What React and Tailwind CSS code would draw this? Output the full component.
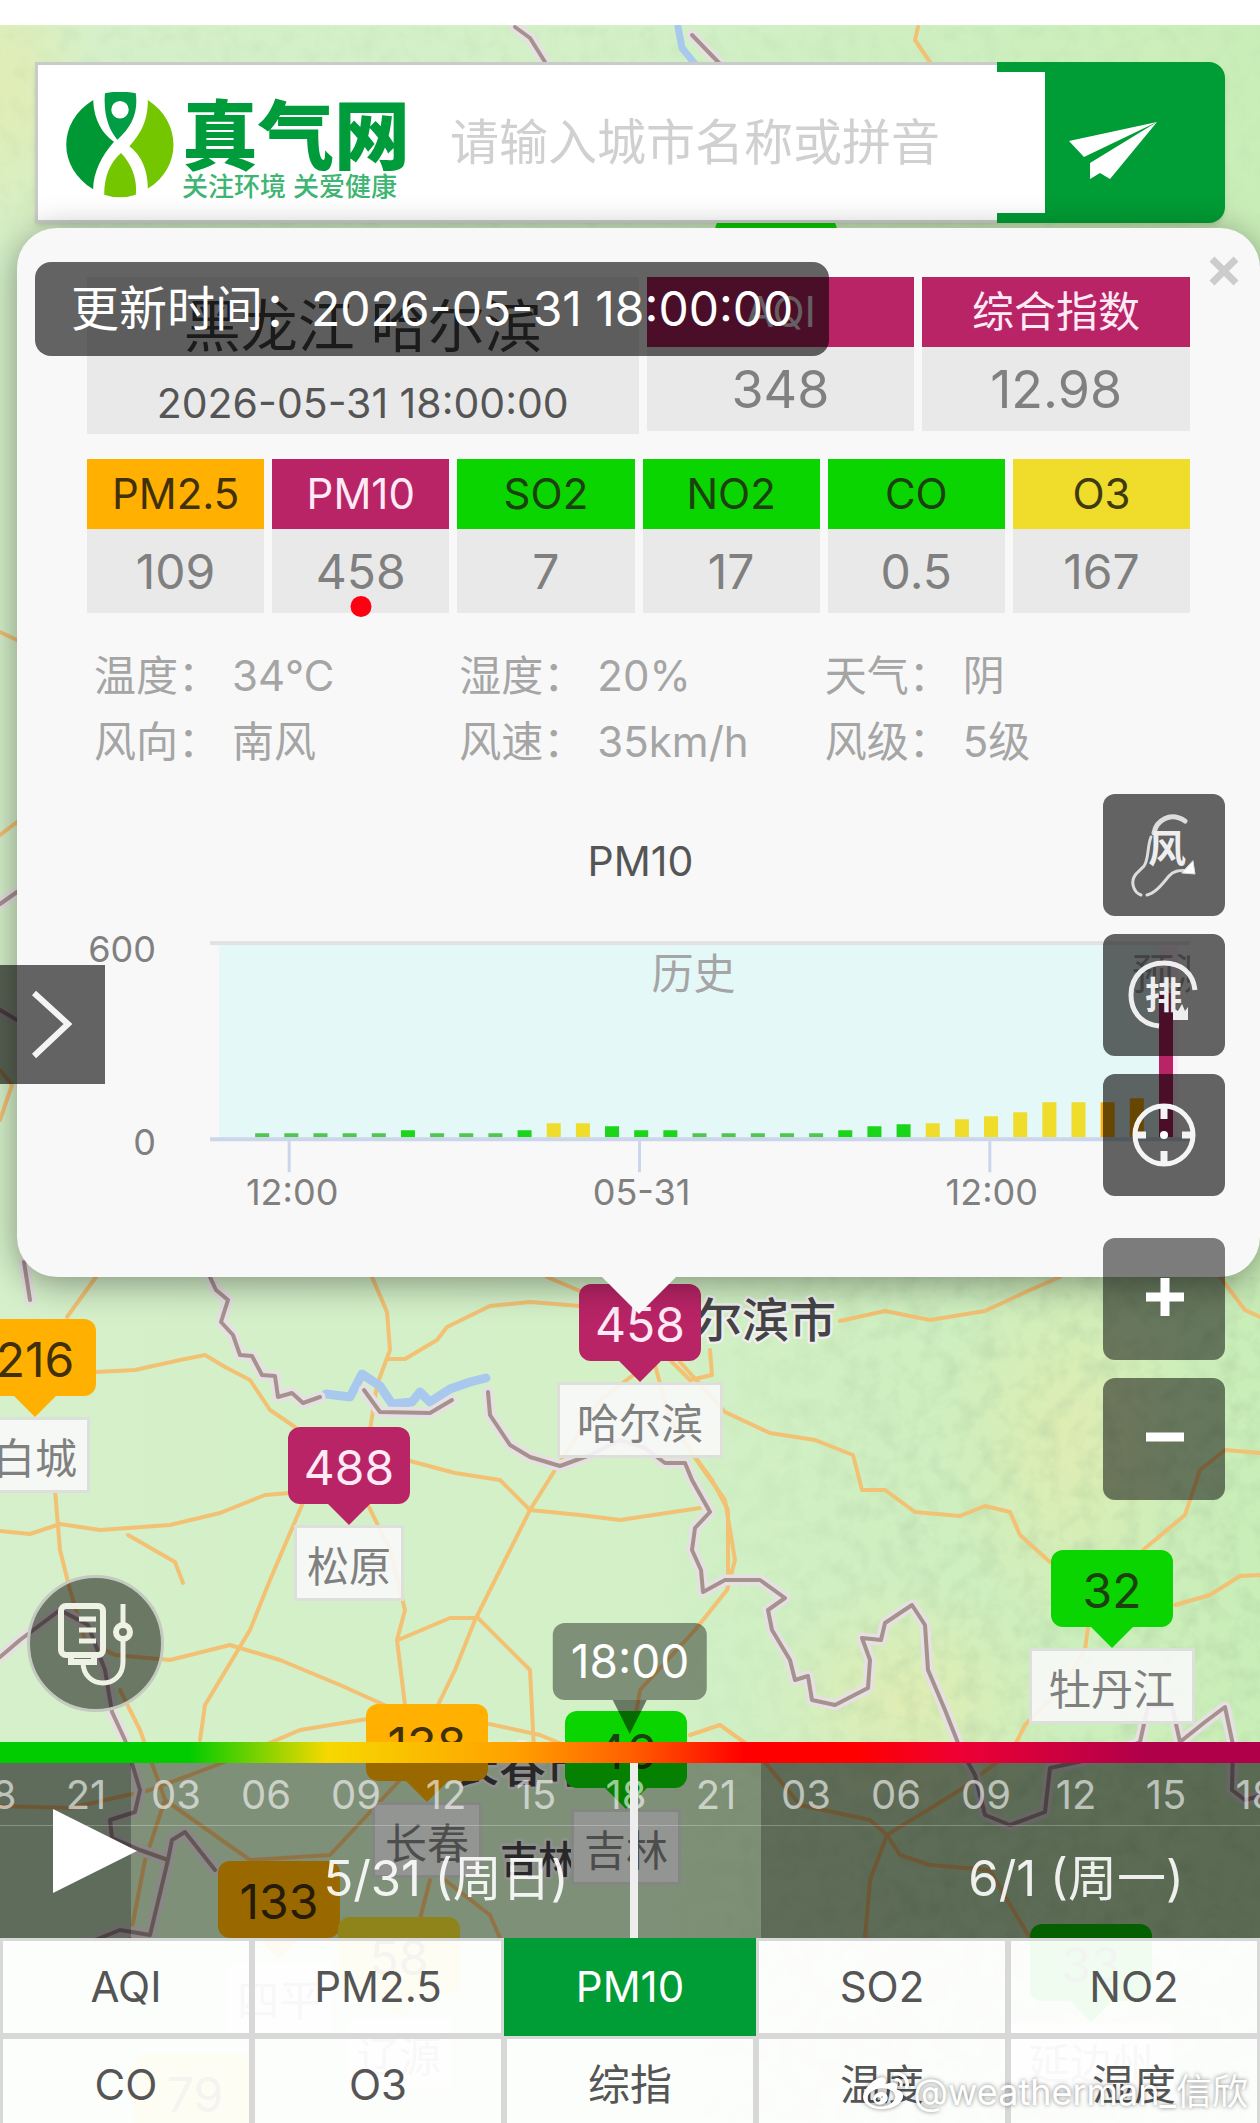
import { FaWeibo } from "react-icons/fa";

const MARKERS = [
  { value: 41, name: "绥化", left: "left-[776px]", top: "top-[218px]", level: "good" },
  { value: 216, name: "白城", left: "left-[35px]", top: "top-[1319px]", level: "light" },
  { value: 458, name: "哈尔滨", left: "left-[640px]", top: "top-[1284px]", level: "severe" },
  { value: 488, name: "松原", left: "left-[349px]", top: "top-[1427px]", level: "severe" },
  { value: 32, name: "牡丹江", left: "left-[1112px]", top: "top-[1550px]", level: "good" },
  { value: 138, name: "长春", left: "left-[427px]", top: "top-[1704px]", level: "light" },
  { value: 46, name: "吉林", left: "left-[626px]", top: "top-[1711px]", level: "good" },
  { value: 133, name: "四平", left: "left-[279px]", top: "top-[1861px]", level: "light" },
  { value: 58, name: "辽源", left: "left-[399px]", top: "top-[1917px]", level: "moderate" },
  { value: 33, name: "延边州", left: "left-[1091px]", top: "top-[1924px]", level: "good" },
  { value: 79, name: "通化", left: "left-[195px]", top: "top-[2054px]", level: "moderate" },
];

const LEVELS = {
  good: { box: "bg-[#0bd500] text-[#1d4010]", arrow: "border-t-[#0bd500]" },
  moderate: { box: "bg-[#efdc2b] text-[#3f3a10]", arrow: "border-t-[#efdc2b]" },
  light: { box: "bg-[#ffb000] text-[#40300c]", arrow: "border-t-[#ffb000]" },
  severe: { box: "bg-[#b82466] text-[#fdeaf5]", arrow: "border-t-[#b82466]" },
};

const POLLUTANTS = [
  { name: "PM2.5", value: "109", level: "light" },
  { name: "PM10", value: "458", level: "severe", active: true },
  { name: "SO2", value: "7", level: "good" },
  { name: "NO2", value: "17", level: "good" },
  { name: "CO", value: "0.5", level: "good" },
  { name: "O3", value: "167", level: "moderate" },
];

const WEATHER = [
  ["温度：", "34℃"],
  ["湿度：", "20%"],
  ["天气：", "阴"],
  ["风向：", "南风"],
  ["风速：", "35km/h"],
  ["风级：", "5级"],
];

const BARS = [
  4, 4, 4, 4, 4, 7, 4, 4, 4, 7, 14, 14, 11, 7, 7, 4, 4, 4, 4, 4, 7, 11, 13, 14,
  18, 21, 25, 35, 35, 35, 39, 144,
];

const barColor = (i) => {
  if (i === 31) return "#b82466";
  if (i === 29 || i === 30) return "#ffb000";
  if (i === 10 || i === 11 || i >= 23) return "#efdc2b";
  return BARS[i] > 4 ? "#1bd51b" : "#4fc64f";
};

const DAYS = [
  { label: "5/30 (周六)", bg: "bg-black/55" },
  { label: "5/31 (周日)", bg: "bg-black/40" },
  { label: "6/1 (周一)", bg: "bg-black/55" },
];

const HOURS = ["03", "06", "09", "12", "15", "18", "21"];

const TABS = ["AQI", "PM2.5", "PM10", "SO2", "NO2", "CO", "O3", "综指", "温度", "湿度"];

const ROADS = [
  "M372 1277L387 1312L390 1350L377 1385L370 1430",
  "M547 1277L580 1291",
  "M388 1359L405 1359L437 1340L447 1327L490 1306L530 1302L580 1306",
  "M96 1277L67 1317",
  "M96 1372L135 1370L180 1360L205 1355L225 1367L250 1380L270 1410L295 1427",
  "M410 1461L455 1473L500 1480L530 1510L580 1515L620 1520L700 1508",
  "M0 1531L30 1534L60 1524L100 1530L170 1525L220 1513L265 1495L290 1493",
  "M55 1490L60 1550L70 1590L85 1640L115 1655L170 1660L230 1645L280 1660L340 1685L400 1712",
  "M302 1505L270 1580L250 1630L205 1705L200 1740",
  "M368 1505L390 1550L405 1610L397 1640L405 1705",
  "M640 1370L600 1400L555 1470L530 1510L490 1590L475 1620L455 1670L438 1705",
  "M398 1640L450 1618L478 1618L530 1670L535 1770",
  "M128 1535L175 1562L183 1583",
  "M680 1362L725 1412L770 1433L815 1440L853 1455L862 1490L885 1490L915 1512L960 1516L985 1506L1010 1512L1020 1535L1050 1562",
  "M655 1365L670 1420L700 1465L725 1500L735 1560L727 1590L695 1630L640 1690L630 1750",
  "M690 1450L712 1480L728 1510L728 1575",
  "M710 1350L712 1375L690 1380L670 1360",
  "M840 1321L885 1311L930 1320L985 1311L1030 1290L1060 1277",
  "M1143 1550L1185 1515L1200 1470L1225 1450L1260 1453",
  "M1175 1605L1210 1595L1240 1576L1260 1575",
  "M1088 1627L1085 1650L1060 1690L1025 1725L1015 1745",
  "M1220 1277L1245 1310L1260 1317",
  "M0 1806L70 1808L150 1790L230 1760L300 1730L410 1712",
  "M120 1690L140 1730L165 1800L145 1860L130 1938",
  "M165 1800L250 1860L330 1855L400 1780L460 1750",
  "M430 1880L415 1938M445 1880L490 1915L500 1938",
  "M480 1722L540 1735L600 1760",
  "M690 1735L720 1725L755 1750L800 1805L870 1820L887 1835L960 1790L1000 1760",
  "M887 1835L870 1880L865 1938",
  "M887 1835L900 1855L930 1865L990 1870L1010 1905L1030 1938",
  "M918 27L915 40L930 62",
  "M0 632L17 640M0 835L17 822M0 1070L12 1085L0 1120",
];

const BORDERS = [
  "M210 1277L216 1290L228 1300L221 1322L233 1335L240 1355L252 1356L262 1375L275 1376L278 1397L292 1393L303 1403L320 1397",
  "M364 1390L380 1412L430 1413L452 1400",
  "M488 1392L490 1415L510 1445L530 1457L560 1466L590 1455L620 1440L645 1448L665 1463L685 1463L692 1480L710 1512L695 1528L692 1550L701 1570L703 1592L725 1580L738 1580L760 1580L785 1598L768 1610L772 1630L790 1660L795 1680L808 1676L812 1700L835 1705L868 1688L870 1660L862 1638L881 1640L885 1623L912 1605L925 1625L928 1670L945 1710L960 1748L975 1775L985 1815L1010 1825L1045 1812L1050 1768L1110 1755L1140 1742L1148 1706L1172 1706L1180 1742L1205 1722L1225 1707L1233 1745L1232 1790L1245 1800L1260 1796",
  "M0 1657L20 1640L60 1610L88 1625L105 1670L112 1712L125 1740L140 1790L135 1812L110 1820L112 1838L140 1850L168 1860L172 1840L185 1832L215 1870M168 1860L150 1935L120 1930L95 1940",
  "M24 1262L30 1300",
  "M515 27L530 38L545 62",
  "M692 35L722 66",
  "M0 904L17 892M0 1010L17 1020",
];

const MapBackground = () => (
  <svg
    className="absolute inset-0 h-full w-full"
    viewBox="0 0 1260 2123"
    preserveAspectRatio="xMinYMin slice"
    fill="none"
    strokeLinejoin="round"
    strokeLinecap="round"
  >
    <defs>
      <linearGradient id="land" x1="0" x2="1" y1="0" y2="0">
        <stop offset="0" stopColor="#d5f0ca" />
        <stop offset="0.5" stopColor="#d3f0c7" />
        <stop offset="1" stopColor="#caeeb8" />
      </linearGradient>
      <radialGradient id="hill">
        <stop offset="0" stopColor="#e4ecb0" stopOpacity="0.8" />
        <stop offset="1" stopColor="#e4ecb0" stopOpacity="0" />
      </radialGradient>
      <linearGradient id="fade">
        <stop offset="0" stopColor="#fff" stopOpacity="0" />
        <stop offset="0.4" stopColor="#fff" stopOpacity="0.8" />
        <stop offset="1" stopColor="#fff" />
      </linearGradient>
      <mask id="east">
        <rect x="660" y="1277" width="600" height="846" fill="url(#fade)" />
      </mask>
      <filter id="relief" x="0" y="0" width="100%" height="100%">
        <feTurbulence type="fractalNoise" baseFrequency="0.05" numOctaves="3" seed="4" />
        <feColorMatrix values="0 0 0 0 0.4  0 0 0 0 0.6  0 0 0 0 0.35  0.9 0 0 0 -0.38" />
      </filter>
    </defs>
    <rect width="1260" height="2123" fill="url(#land)" />
    <ellipse cx="1070" cy="1440" rx="130" ry="200" fill="url(#hill)" />
    <ellipse cx="910" cy="1700" rx="150" ry="120" fill="url(#hill)" />
    <ellipse cx="10" cy="90" rx="90" ry="180" fill="url(#hill)" />
    <g mask="url(#east)">
      <rect x="660" y="1277" width="600" height="846" filter="url(#relief)" />
    </g>
    <rect y="27" width="1260" height="200" filter="url(#relief)" opacity="0.4" />
    <g stroke="#f2c174" strokeWidth="4">
      {ROADS.map((d) => (
        <path key={d} d={d} />
      ))}
    </g>
    <path
      d="M326 1394L350 1397L362 1374L380 1386L392 1404L412 1402L420 1392L430 1402L450 1389L470 1382L486 1378"
      stroke="#a9c8ee"
      strokeWidth="9"
    />
    <path d="M678 27L682 48L695 64" stroke="#a9c8ee" strokeWidth="7" />
    <g stroke="#e6dfe4" strokeWidth="11">
      {BORDERS.map((d) => (
        <path key={d} d={d} />
      ))}
    </g>
    <g stroke="#a5928c" strokeWidth="4">
      {BORDERS.map((d) => (
        <path key={d} d={d} />
      ))}
    </g>
    <g fill="#444" stroke="#eee" strokeWidth="5" paintOrder="stroke" fontWeight="500" fontSize="47">
      <text x="648" y="1337">哈尔滨市</text>
      <text x="452" y="1782">长春市</text>
      <text x="500" y="1873" fontSize="38">吉林</text>
    </g>
  </svg>
);

const Marker = ({ value, name, left, top, level }) => (
  <div className={`absolute flex -translate-x-1/2 flex-col items-center ${left} ${top}`}>
    <div
      className={`flex h-[77px] w-[122px] items-center justify-center rounded-xl pt-1 text-[48px] leading-none ${LEVELS[level].box}`}
    >
      {value}
    </div>
    <div
      className={`h-0 w-0 border-x-[21px] border-t-[21px] border-x-transparent ${LEVELS[level].arrow}`}
    />
    <div
      className={`flex h-[76px] items-center justify-center border-[3px] border-[#dcdfda] bg-[#f8f8f8]/90 pt-2 text-[42px] leading-none whitespace-nowrap text-[#808080] ${
        name.length > 2 ? "w-[166px]" : "w-[110px]"
      }`}
    >
      {name}
    </div>
  </div>
);

const Logo = () => (
  <div className="flex shrink-0 items-center gap-2 pt-1 pl-7">
    <svg width="108" height="106" viewBox="0 0 320 316">
      <path d="M80 24C-27 90 -27 225 80 290C80 240 105 190 142 148C108 125 82 85 80 24Z" fill="#009834" />
      <path
        d="M115 4Q160 -6 207 4C215 60 195 105 152 142C128 115 110 70 115 4ZM134 53A26 26 0 1 0 186 53A26 26 0 1 0 134 53Z"
        fill="#009d45"
        fillRule="evenodd"
      />
      <path d="M243 24C345 90 345 225 243 288C243 235 225 190 188 162C220 125 243 90 243 24Z" fill="#73c600" />
      <path d="M163 182C195 215 212 260 207 306Q160 322 113 306C112 255 130 210 163 182Z" fill="#73c600" />
    </svg>
    <div className="flex flex-col pt-2 text-[#009c3c]">
      <span className="text-[76px] leading-[76px] font-black">真气网</span>
      <span className="text-[26px] leading-[26px] font-medium text-[#3eb572]">关注环境 关爱健康</span>
    </div>
  </div>
);

const SearchBar = () => (
  <form className="mx-[35px] mt-[37px] flex h-[161px] shrink-0 rounded-r-2xl shadow-md">
    <div className="flex min-w-0 flex-1 items-center border-[3px] border-r-0 border-[#c8cbc8] bg-white">
      <Logo />
      <label htmlFor="city" className="sr-only">
        城市
      </label>
      <input
        id="city"
        type="text"
        placeholder="请输入城市名称或拼音"
        className="ml-10 min-w-0 flex-1 text-[49px] leading-[64px] outline-none placeholder:text-[#d0d0d0]"
      />
    </div>
    <button
      type="button"
      aria-label="搜索"
      className="flex w-[228px] items-center rounded-r-2xl bg-[#009c35]"
    >
      <span className="h-[141px] w-12 bg-white" />
      <svg className="mt-4 ml-6" width="88" height="57" viewBox="0 0 88 57" fill="#fff">
        <path d="M0 19L88 0L15 35Z" />
        <path d="M88 0L21 41V57L31 51L41 57Z" />
      </svg>
    </button>
  </form>
);

const Reading = ({ name, value, level, active, large }) => (
  <div className="relative flex min-w-0 flex-1 flex-col bg-[#e9e9e9] text-center">
    <div className={`h-[70px] text-[42px] leading-[70px] ${LEVELS[level].box}`}>{name}</div>
    <div
      className={`h-[84px] leading-[86px] text-[#808080] ${large ? "text-[52px]" : "text-[48px]"}`}
    >
      {value}
    </div>
    {active && (
      <span className="absolute -bottom-1 left-1/2 h-[21px] w-[21px] -translate-x-1/2 rounded-full bg-[#ff0012]" />
    )}
  </div>
);

const HistoryChart = () => (
  <svg className="block w-full" viewBox="0 0 1102 396" fontSize="36" fill="#808080">
    <text x="553" y="44" fontSize="41" fill="#555" textAnchor="middle">
      PM10
    </text>
    <rect x="132" y="113" width="939" height="193" fill="#e5f8f8" />
    <rect x="1071" y="113" width="19" height="193" fill="#fbeaf8" />
    <rect x="123" y="109" width="979" height="4" fill="#e1e3e3" />
    {BARS.map((h, i) => (
      <rect key={i} x={168 + i * 29.13} y={305 - h} width="14" height={h} fill={barColor(i)} />
    ))}
    <rect x="123" y="305" width="979" height="4" fill="#ccd6eb" />
    <path d="M202 309V340M552 309V340M902 309V340" stroke="#ccd6eb" strokeWidth="3" />
    <text x="69" y="130" textAnchor="end">600</text>
    <text x="69" y="323" textAnchor="end">0</text>
    <text x="205" y="373" textAnchor="middle">12:00</text>
    <text x="554" y="373" textAnchor="middle">05-31</text>
    <text x="904" y="373" textAnchor="middle">12:00</text>
    <g fontSize="42" fill="#a5a5a5">
      <text x="564" y="157">历史</text>
      <text x="1044" y="157">预测</text>
    </g>
  </svg>
);

const CityPanel = () => (
  <section className="relative mt-[5px] ml-[17px] shrink-0 rounded-[40px] bg-[#f8f8f8] px-[70px] pt-[49px] pb-[49px] shadow-[0_6px_36px_rgba(0,0,0,0.4)]">
    <button
      type="button"
      aria-label="关闭"
      className="absolute top-[27px] right-5 flex h-8 w-8 items-center justify-center"
    >
      <svg width="30" height="30" viewBox="0 0 30 30" stroke="#ccc" strokeWidth="7">
        <path d="M3 3L27 27M27 3L3 27" />
      </svg>
    </button>
    <div className="flex items-start gap-2">
      <div className="flex h-[157px] w-1/2 flex-col items-center bg-[#e9e9e9]">
        <h1 className="mt-2 text-[57px] leading-[84px] text-[#444]">黑龙江 哈尔滨</h1>
        <time className="text-[41px] leading-[68px] text-[#555]">2026-05-31 18:00:00</time>
      </div>
      <Reading name="AQI" value="348" level="severe" large />
      <Reading name="综合指数" value="12.98" level="severe" large />
    </div>
    <div className="mt-[25px] flex gap-2">
      {POLLUTANTS.map((p) => (
        <Reading key={p.name} {...p} />
      ))}
    </div>
    <dl className="mt-[30px] ml-[7px] grid grid-cols-3 text-[42px] leading-[66px] text-[#a5a5a5]">
      {WEATHER.map(([label, value]) => (
        <div key={label} className="flex gap-3">
          <dt>{label}</dt>
          <dd>{value}</dd>
        </div>
      ))}
    </dl>
    <div className="mt-[57px]">
      <HistoryChart />
    </div>
    <div className="absolute top-full left-1/2 h-0 w-0 -translate-x-1/2 border-x-[37px] border-t-[37px] border-x-transparent border-t-[#f8f8f8]" />
  </section>
);

const MapButton = ({ label, className = "bg-black/60", children }) => (
  <button
    type="button"
    aria-label={label}
    className={`flex h-[122px] w-[122px] items-center justify-center rounded-xl ${className}`}
  >
    {children}
  </button>
);

const MapTools = () => (
  <div className="absolute top-[794px] right-[35px] flex flex-col gap-[18px]">
    <MapButton label="风场">
      <svg width="70" height="84" viewBox="0 0 70 84" fill="none" stroke="#ddd" strokeLinecap="round">
        <path d="M25 20C27 8 41 -2 56 8" strokeWidth="5" />
        <path d="M22 24C18 34 20 46 15 53L7 61C1 68 4 79 12 82M18 82C27 80 34 70 40 63C46 56 54 58 61 57" strokeWidth="3" />
        <path d="M64 48L66 61L53 60Z" fill="#fff" strokeWidth="1" />
        <text x="19" y="49" fontSize="38" fontWeight="700" fill="#eee" stroke="none">
          风
        </text>
      </svg>
    </MapButton>
    <MapButton label="排放源">
      <svg width="72" height="72" viewBox="0 0 72 72" fill="none" stroke="#eee">
        <path d="M31 67C11 65 3 50 3 36C3 17 17 4 36 4C53 4 65 14 67 31" strokeWidth="5" />
        <text x="17" y="50" fontSize="37" fontWeight="700" fill="#eee" stroke="none">
          排
        </text>
        <path d="M45 61V49L50 52L54 45L57 52L60 48V61Z" fill="#eee" stroke="none" />
      </svg>
    </MapButton>
    <MapButton label="定位">
      <svg width="66" height="66" viewBox="0 0 66 66" fill="none" stroke="#f4f4f4" strokeWidth="5">
        <circle cx="33" cy="33" r="29" />
        <path d="M33 4V17M33 49V62M4 33H15M51 33H62" strokeWidth="7" />
        <circle cx="33" cy="33" r="4" fill="#fff" stroke="none" />
      </svg>
    </MapButton>
    <MapButton label="放大" className="mt-6 bg-black/50">
      <svg width="40" height="44" viewBox="0 0 40 44" stroke="#fff" strokeWidth="9">
        <path d="M21 1V39M2 20H40" />
      </svg>
    </MapButton>
    <MapButton label="缩小" className="bg-black/50">
      <svg width="40" height="44" viewBox="0 0 40 44" stroke="#fff" strokeWidth="9">
        <path d="M2 20H40" />
      </svg>
    </MapButton>
  </div>
);

const Timeline = () => (
  <div className="relative shrink-0">
    <div className="absolute bottom-full left-1/2 mb-2 flex -translate-x-1/2 flex-col items-center">
      <span className="rounded-xl bg-black/40 px-[18px] text-[46px] leading-[77px] text-white">18:00</span>
      <span className="h-0 w-0 border-x-[17px] border-t-[34px] border-x-transparent border-t-black/50" />
    </div>
    <div className="h-[21px] bg-[linear-gradient(90deg,#00cc00_0%,#00cc00_15%,#f6d800_26%,#ffa000_41%,#ff6000_50%,#ff0000_59%,#ff0000_68%,#ee0033_76%,#b0004a_91%,#b0004a_100%)]" />
    <div className="relative h-[175px] overflow-hidden">
      <div className="-ml-[499px] flex h-full">
        {DAYS.map((day) => (
          <div key={day.label} className={`w-[630px] shrink-0 text-center ${day.bg}`}>
            <div className="flex h-[63px] border-b border-white/25 text-[40px] leading-[64px] text-white/60">
              {HOURS.map((hour) => (
                <span key={hour} className="flex-1">
                  {hour}
                </span>
              ))}
            </div>
            <div className="text-[49px] leading-[106px] text-white/90">{day.label}</div>
          </div>
        ))}
      </div>
      <div className="absolute top-0 left-1/2 h-full w-2 bg-[#eee]" />
      <button type="button" aria-label="播放" className="absolute top-[46px] left-[53px]">
        <svg width="84" height="84" viewBox="0 0 84 84" fill="#fff">
          <path d="M0 0L84 42L0 84Z" />
        </svg>
      </button>
    </div>
  </div>
);

const Tabs = () => (
  <nav className="-mb-[11px] grid shrink-0 grid-cols-5">
    {TABS.map((tab) => (
      <button
        key={tab}
        type="button"
        className={`h-[98px] border-[3px] text-[42px] leading-none ${
          tab === "PM10"
            ? "border-[#009c35] bg-[#009c35] text-white"
            : "border-[#d8d8d8] bg-[#fefefe]/95 text-[#555]"
        }`}
      >
        {tab}
      </button>
    ))}
  </nav>
);

const App = () => (
  <main className="relative flex h-screen flex-col overflow-hidden bg-[#d3f0c7] font-[Inter,'Noto_Sans_CJK_SC',sans-serif]">
    <MapBackground />
    {MARKERS.map((m) => (
      <Marker key={m.name} {...m} />
    ))}
    <div className="relative flex min-h-0 flex-1 flex-col">
      <div className="h-[25px] shrink-0 bg-white" />
      <SearchBar />
      <CityPanel />
      <div className="flex-1" />
      <Timeline />
      <Tabs />
    </div>
    <div className="absolute top-[262px] left-[35px] rounded-2xl bg-black/60 px-9 text-[48px] leading-[94px] text-white">
      更新时间：2026-05-31 18:00:00
    </div>
    <button
      type="button"
      aria-label="展开"
      className="absolute top-[965px] left-0 flex h-[119px] w-[105px] items-center justify-center bg-black/60"
    >
      <svg width="44" height="72" viewBox="0 0 44 72" fill="none" stroke="#f4f4f4" strokeWidth="6">
        <path d="M3 4L37 35L3 67" />
      </svg>
    </button>
    <MapTools />
    <button
      type="button"
      aria-label="监测设备"
      className="absolute top-[1575px] left-[27px] flex h-[137px] w-[137px] items-center justify-center rounded-full border-[3px] border-[#c4cac0] bg-black/50"
    >
      <svg width="78" height="84" viewBox="0 0 78 84" fill="none" stroke="#eef2e4" strokeWidth="6">
        <rect x="4" y="4" width="42" height="49" rx="5" />
        <path d="M22 17H39M22 28H39M22 39H39" strokeWidth="5" />
        <path d="M14 53V60H37V53" />
        <path d="M26 60C26 88 66 88 66 60V38M66 22V2" strokeWidth="5" />
        <circle cx="66" cy="30" r="7" />
      </svg>
    </button>
    <div className="absolute right-3 bottom-2 flex items-center gap-1 text-[36px] leading-10 text-white [text-shadow:0_0_4px_rgba(0,0,0,0.5)]">
      <FaWeibo size={46} className="drop-shadow-[0_0_2px_rgba(0,0,0,0.5)]" />
      @weatherman_信欣
    </div>
  </main>
);

export default App;
